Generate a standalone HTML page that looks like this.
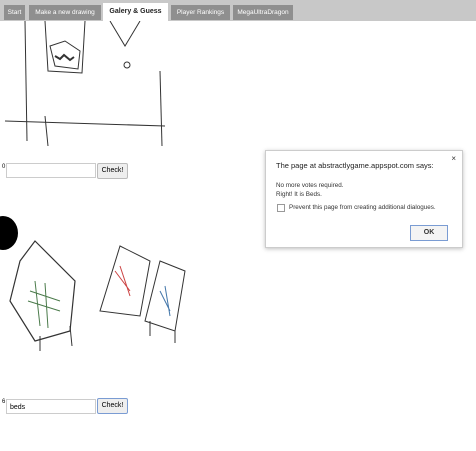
<!DOCTYPE html>
<html><head><style>
body{margin:0;width:476px;height:450px;background:#fff;font-family:"Liberation Sans",sans-serif;position:relative;overflow:hidden}
.bar{position:absolute;left:0;top:0;width:476px;height:21px;background:#c8c8c8}
.tab{position:absolute;top:5px;height:15px;background:#8f8f8f;color:#fff;font-size:6.5px;line-height:15px;text-align:center;white-space:nowrap;overflow:hidden}
.tab.a{background:#fff;color:#222;font-weight:bold;top:3px;height:18px;line-height:18px;font-size:7px}
.in{position:absolute;height:15px;border:1px solid #ccc;background:#fff;font-size:7px;line-height:15px;padding-left:3px;box-sizing:border-box}
.btn{position:absolute;height:16px;border:1px solid #bbb;background:#eee;border-radius:2px;font-size:7px;line-height:14px;text-align:center;box-sizing:border-box}
.dlg{position:absolute;left:265px;top:150px;width:196px;height:96px;border:1px solid #ccc;background:#fff;box-shadow:0 1px 4px rgba(0,0,0,.25)}
.dlg div{position:absolute;font-size:6.3px;color:#333}
</style></head><body>
<div class="bar"></div>
<div class="tab" style="left:4px;width:21px">Start</div>
<div class="tab" style="left:29px;width:72px">Make a new drawing</div>
<div class="tab a" style="left:103px;width:65px">Galery &amp; Guess</div>
<div class="tab" style="left:171px;width:59px">Player Rankings</div>
<div class="tab" style="left:233px;width:60px">MegaUltraDragon</div>
<svg style="position:absolute;left:0;top:21px" width="476" height="430" fill="none" stroke="#333" stroke-width="1">
<path d="M45 0 L48 50 L82 52 L85 0"/><path d="M50 25 L65 20 L80 30 L78 48 L55 45 Z"/>
<path d="M55 35 l5 3 l4-4 l6 5 l4-3" stroke-width="2"/>
<path d="M110 0 L125 25 L140 0"/><circle cx="127" cy="44" r="3"/>
<path d="M25 0 L27 120"/><path d="M5 100 L165 105"/><path d="M160 50 L162 125"/><path d="M45 95 L48 125"/>
<path d="M20 240 L35 220 L75 260 L70 310 L35 320 L10 280 Z" stroke-width="1.2"/>
<path d="M30 270 l30 10 M28 280 l32 10 M35 260 l5 45 M45 262 l3 45" stroke="#4a7a4a"/>
<path d="M40 315 l0 15 M70 305 l2 20"/>
<path d="M120 225 L150 240 L140 295 L100 290 Z"/><path d="M115 250 l15 20 M120 245 l10 30" stroke="#c44"/>
<path d="M160 240 L185 250 L175 310 L145 300 Z"/><path d="M160 270 l10 20 M165 265 l5 30" stroke="#47a"/>
<path d="M150 300 l0 15 M175 310 l0 12"/>
</svg>
<div style="position:absolute;left:-12px;top:216px;width:30px;height:34px;border-radius:50%;background:#000"></div>
<div style="position:absolute;left:2px;top:164px;font-size:6px">0</div>
<div class="in" style="left:6px;top:163px;width:90px"></div>
<div class="btn" style="left:97px;top:163px;width:31px">Check!</div>
<div style="position:absolute;left:2px;top:399px;font-size:6px">6</div>
<div class="in" style="left:6px;top:399px;width:90px">beds</div>
<div class="btn" style="left:97px;top:398px;width:31px;border-color:#7a9cd3">Check!</div>
<div class="dlg">
<div style="left:10px;top:10px;font-size:7.5px;color:#222">The page at abstractlygame.appspot.com says:</div>
<div style="right:6px;top:3px;font-size:8px">×</div>
<div style="left:10px;top:31px">No more votes required.</div>
<div style="left:10px;top:40px">Right! It is Beds.</div>
<div style="left:11px;top:53px;width:6px;height:6px;border:1px solid #999"></div>
<div style="left:23px;top:53px">Prevent this page from creating additional dialogues.</div>
<div style="left:144px;top:74px;width:36px;height:14px;border:1px solid #7a9cd3;background:#f4f4f4;text-align:center;line-height:14px;font-weight:bold;font-size:7px">OK</div>
</div>
</body></html>
